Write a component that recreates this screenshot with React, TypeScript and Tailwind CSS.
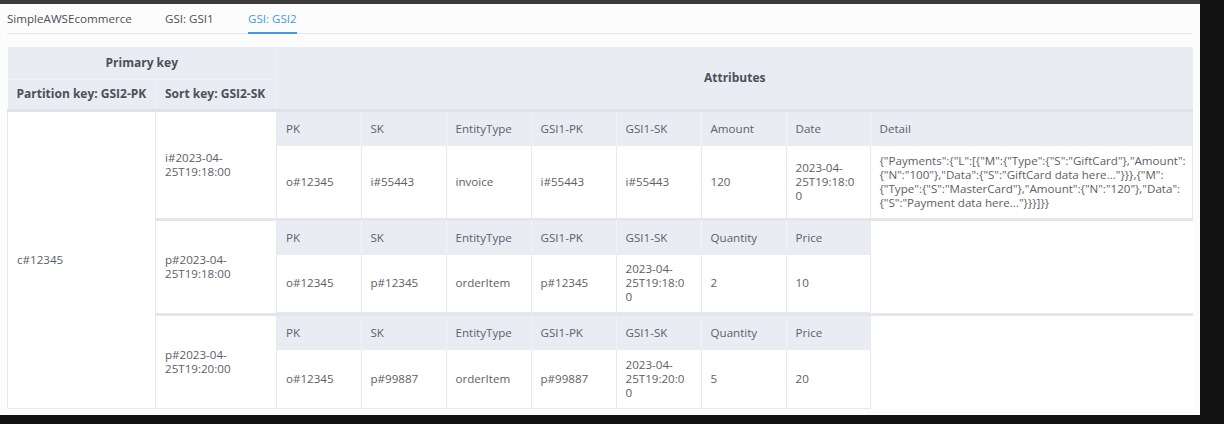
const font = { fontFamily: '"Open Sans", "Noto Sans", sans-serif' };

type Group = {
  sortKey: string[];
  cols: string[];
  values: (string | string[])[];
  dataHeight: string;
};

const colWidths = [84, 85, 85, 85, 85, 85, 84, 323];

const groups: Group[] = [
  {
    sortKey: ["i#2023-04-", "25T19:18:00"],
    cols: ["PK", "SK", "EntityType", "GSI1-PK", "GSI1-SK", "Amount", "Date", "Detail"],
    values: [
      "o#12345",
      "i#55443",
      "invoice",
      "i#55443",
      "i#55443",
      "120",
      ["2023-04-", "25T19:18:0", "0"],
      [
        '{"Payments":{"L":[{"M":{"Type":{"S":"GiftCard"},"Amount":',
        '{"N":"100"},"Data":{"S":"GiftCard data here..."}}},{"M":',
        '{"Type":{"S":"MasterCard"},"Amount":{"N":"120"},"Data":',
        '{"S":"Payment data here..."}}}]}}',
      ],
    ],
    dataHeight: "h-[72px]",
  },
  {
    sortKey: ["p#2023-04-", "25T19:18:00"],
    cols: ["PK", "SK", "EntityType", "GSI1-PK", "GSI1-SK", "Quantity", "Price"],
    values: ["o#12345", "p#12345", "orderItem", "p#12345", ["2023-04-", "25T19:18:0", "0"], "2", "10"],
    dataHeight: "h-[57px]",
  },
  {
    sortKey: ["p#2023-04-", "25T19:20:00"],
    cols: ["PK", "SK", "EntityType", "GSI1-PK", "GSI1-SK", "Quantity", "Price"],
    values: ["o#12345", "p#99887", "orderItem", "p#99887", ["2023-04-", "25T19:20:0", "0"], "5", "20"],
    dataHeight: "h-[58px]",
  },
];

function Lines({ value }: { value: string | string[] }) {
  if (typeof value === "string") return <>{value}</>;
  return (
    <>
      {value.map((line, i) => (
        <span key={i} className="block whitespace-nowrap">
          {line}
        </span>
      ))}
    </>
  );
}

function ItemTable({ group }: { group: Group }) {
  const widths = colWidths.slice(0, group.cols.length);
  const total = widths.reduce((a, b) => a + b, 0);
  return (
    <table className="table-fixed border-collapse" style={{ width: total }}>
      <colgroup>
        {widths.map((w, i) => (
          <col key={i} style={{ width: w }} />
        ))}
      </colgroup>
      <tbody>
        <tr className="h-[34px] bg-[#e9ecf2]">
          {group.cols.map((c, i) => (
            <td
              key={c}
              className={`pl-[9px] align-middle font-normal text-[#5b6169] ${i > 0 ? "border-l border-[#f1f3f6]" : ""}`}
            >
              {c}
            </td>
          ))}
        </tr>
        <tr className={`${group.dataHeight} bg-white`}>
          {group.values.map((v, i) => (
            <td
              key={i}
              className={`pl-[9px] pr-[4px] align-middle text-[#5b6169] ${i > 0 ? "border-l border-[#e6e9ed]" : ""}`}
            >
              <Lines value={v} />
            </td>
          ))}
        </tr>
      </tbody>
    </table>
  );
}

export default function App() {
  return (
    <div className="w-[1224px] h-[424px] bg-[#111111] flex flex-col overflow-hidden text-[11.6px] leading-[14px]" style={font}>
      <div className="h-[4px] w-[1200px] bg-[#3a3a3a] shrink-0" />
      <div className="w-[1200px] h-[411px] bg-[#fcfcfc] px-[7px] shrink-0 overflow-hidden">
        {/* tabs */}
        <div className="flex h-[30px] border-b border-[#e3e6ea] w-[1185px] text-[#4b5058]">
          <div className="flex items-center w-[158px]">SimpleAWSEcommerce</div>
          <div className="flex items-center w-[83px]">GSI: GSI1</div>
          <div className="flex items-center text-[#3d9be9] border-b-2 border-[#3d9be9] -mb-px pt-[2px]">GSI: GSI2</div>
        </div>

        <table className="mt-[13px] w-[1185px] table-fixed border-collapse">
          <colgroup>
            <col className="w-[148px]" />
            <col className="w-[121px]" />
            <col className="w-[916px]" />
          </colgroup>
          <thead className="text-[12px]">
            <tr className="h-[32px] bg-[#e9ecf2] text-[#4b5058]">
              <th colSpan={2} className="font-bold text-center border-r border-[#f1f3f6]">
                Primary key
              </th>
              <th rowSpan={2} className="font-bold text-center border-b-[3px] border-[#dfe2e8]">
                Attributes
              </th>
            </tr>
            <tr className="h-[31px] bg-[#e9ecf2] text-[#4b5058] border-b-[3px] border-[#dfe2e8]">
              <th className="font-bold text-left pl-[9px] border-t border-r border-[#f1f3f6]">Partition key: GSI2-PK</th>
              <th className="font-bold text-left pl-[9px] border-t border-r border-[#f1f3f6]">Sort key: GSI2-SK</th>
            </tr>
          </thead>
          <tbody className="bg-white">
            {groups.map((g, gi) => (
              <tr key={gi} className={gi > 0 ? "border-t-[3px] border-[#e3e6eb]" : ""}>
                {gi === 0 && (
                  <td rowSpan={3} className="pl-[9px] align-middle text-[#5b6169] border-l border-b border-r border-[#e6e9ed]">
                    c#12345
                  </td>
                )}
                <td className="pl-[9px] align-middle text-[#5b6169] border-r border-b border-[#e6e9ed]">
                  <Lines value={g.sortKey} />
                </td>
                <td className={`p-0 align-top ${gi === 0 ? "border-r border-b border-[#e6e9ed]" : ""}`}>
                  <div className={gi === 0 ? "" : "border-b border-[#e6e9ed] w-fit border-r"}>
                    <ItemTable group={g} />
                  </div>
                </td>
              </tr>
            ))}
          </tbody>
        </table>
      </div>
    </div>
  );
}
